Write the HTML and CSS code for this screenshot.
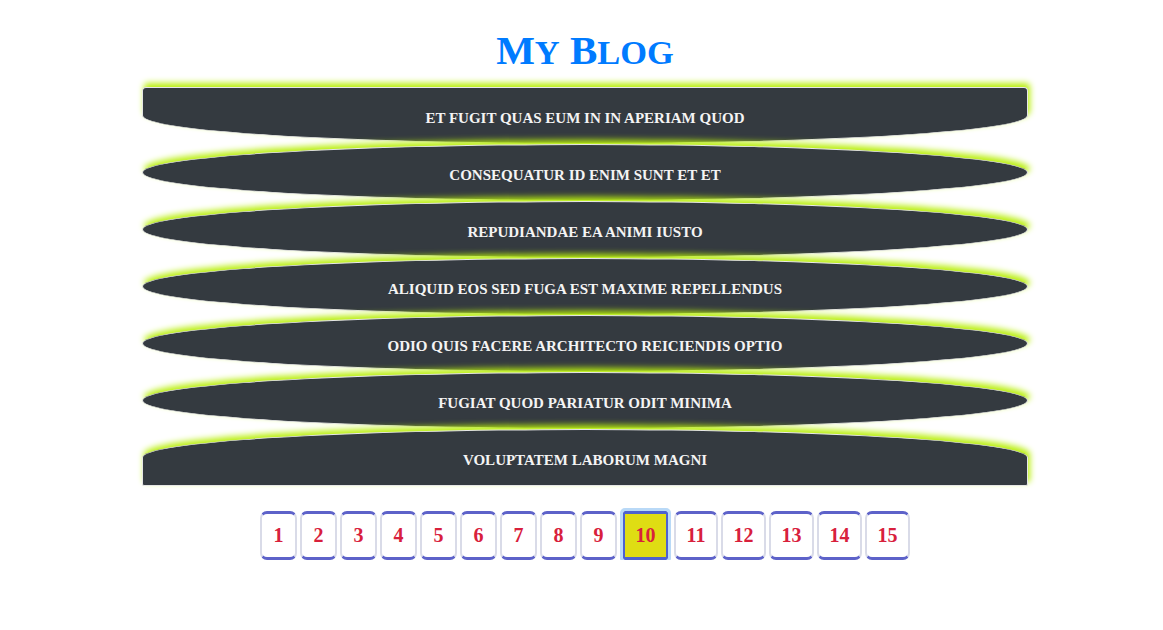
FILE: index.html
```html
<!DOCTYPE html>
<html>
<head>
<meta charset="utf-8">
<link rel="stylesheet" href="styles.css">
</head>
<body>
<div class="page">
  <h1 class="title">M<span class="sc">y</span> B<span class="sc">log</span></h1>
  <ul class="posts">
    <li class="post first">et fugit quas eum in in aperiam quod</li>
    <li class="post">consequatur id enim sunt et et</li>
    <li class="post">repudiandae ea animi iusto</li>
    <li class="post">aliquid eos sed fuga est maxime repellendus</li>
    <li class="post">odio quis facere architecto reiciendis optio</li>
    <li class="post">fugiat quod pariatur odit minima</li>
    <li class="post last">voluptatem laborum magni</li>
  </ul>
  <ul class="pager">
    <li class="pg">1</li>
    <li class="pg">2</li>
    <li class="pg">3</li>
    <li class="pg">4</li>
    <li class="pg">5</li>
    <li class="pg">6</li>
    <li class="pg">7</li>
    <li class="pg">8</li>
    <li class="pg">9</li>
    <li class="pg active">10</li>
    <li class="pg">11</li>
    <li class="pg">12</li>
    <li class="pg">13</li>
    <li class="pg">14</li>
    <li class="pg">15</li>
  </ul>
</div>
</body>
</html>
```

FILE: styles.css
```css
html, body {
  margin: 0;
  padding: 0;
  background: #ffffff;
}

.page {
  display: flex;
  flex-direction: column;
  align-items: center;
  padding-left: 7px;
  font-family: "Liberation Serif", "Times New Roman", serif;
}

.title {
  margin: 24px 0 0 0;
  height: 58px;
  line-height: 52px;
  font-size: 41px;
  font-weight: bold;
  color: #007bff;
}

.title .sc {
  text-transform: uppercase;
  font-size: 0.84em;
}

.posts {
  list-style: none;
  margin: 5px 0 0 0;
  padding: 0;
  width: 886px;
}

.post {
  box-sizing: border-box;
  height: 57px;
  display: flex;
  align-items: center;
  justify-content: center;
  padding-top: 5px;
  background: #343a40;
  color: #f4f4f4;
  font-size: 15px;
  font-weight: bold;
  text-transform: uppercase;
  border: 1px solid #e6e6e6;
  border-radius: 50%;
  box-shadow: 2px -4px 6px #b9ef0c;
}

.post.first {
  border-radius: 4px 4px 50% 50% / 4px 4px 50% 50%;
}

.post.last {
  border-radius: 50% 50% 2px 2px / 50% 50% 2px 2px;
}

.pager {
  list-style: none;
  display: flex;
  gap: 3px;
  margin: 25px 0 0 0;
  padding: 0;
}

.pg {
  box-sizing: border-box;
  height: 49px;
  min-width: 37px;
  padding: 0 10.5px;
  display: flex;
  align-items: center;
  justify-content: center;
  background: #ffffff;
  color: #d8203c;
  font-size: 20px;
  font-weight: bold;
  border-top: 3px solid #5d62c9;
  border-bottom: 3px solid #5d62c9;
  border-left: 2px solid #d9dbe8;
  border-right: 2px solid #d9dbe8;
  border-radius: 7px;
}

.pg.active {
  background: #dfdd13;
  border-radius: 2px;
  border-top-color: #4d62cf;
  border-bottom-color: #4d62cf;
  border-left-color: #4d62cf;
  border-right-color: #4d62cf;
  outline: 3px solid #b9d9f7;
  margin: 0 3px;
}
```
